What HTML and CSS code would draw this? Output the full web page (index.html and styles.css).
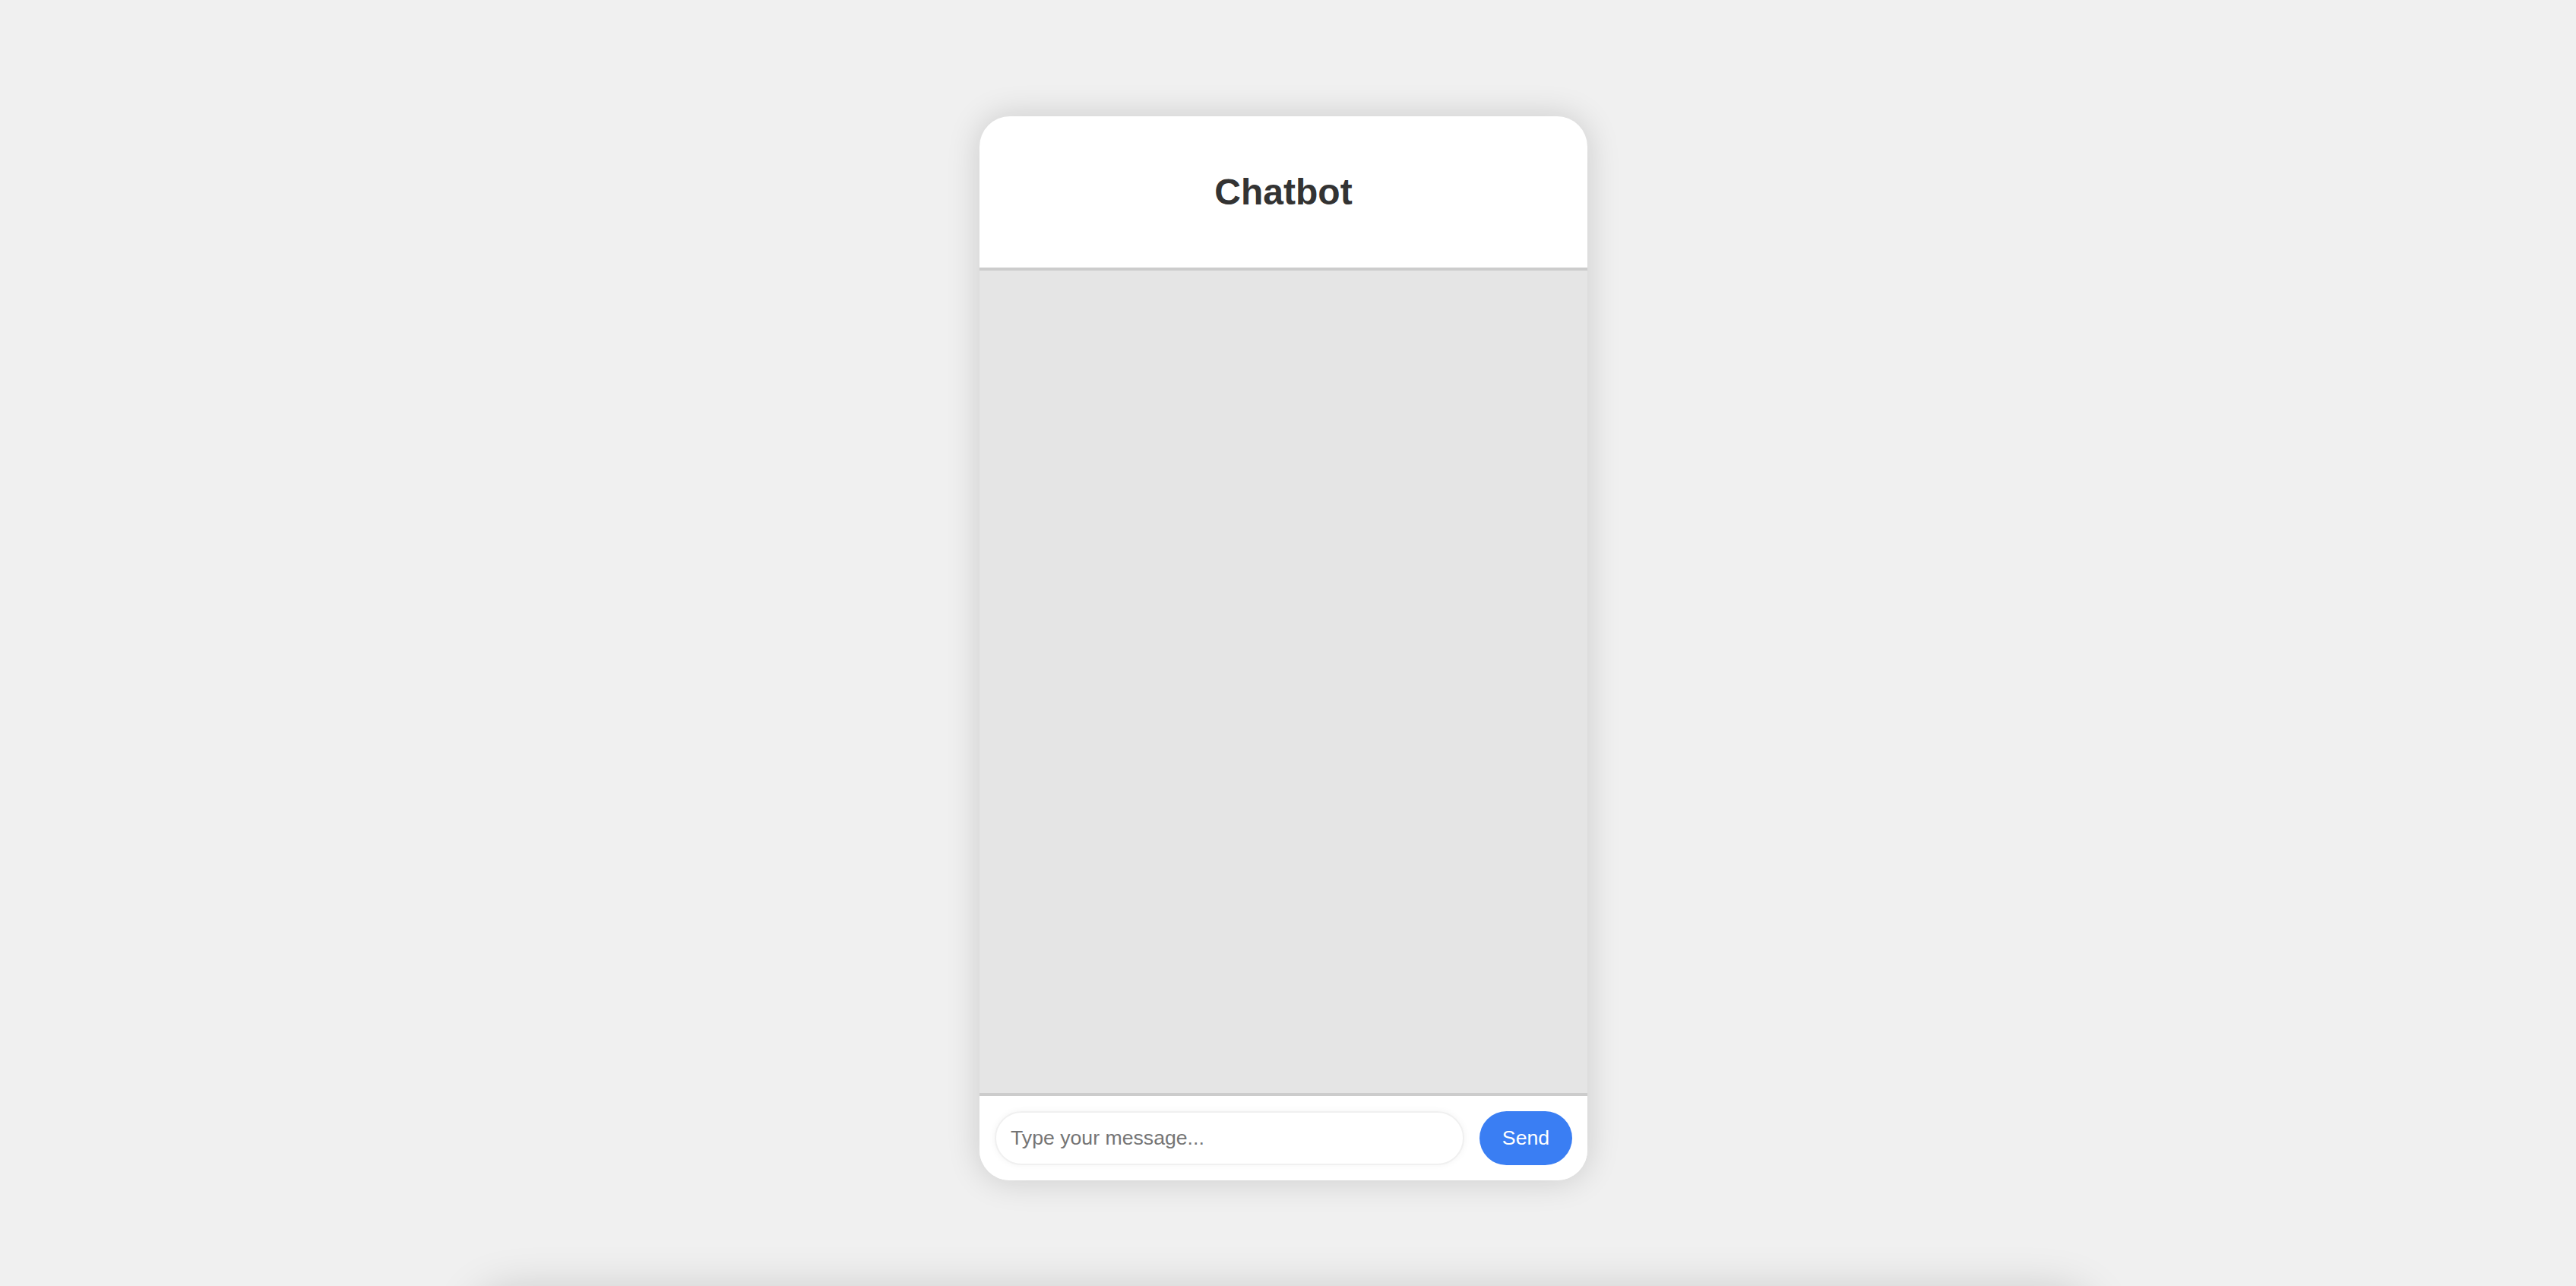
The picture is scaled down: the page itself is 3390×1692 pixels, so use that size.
FILE: index.html
```html
<!DOCTYPE html>
<html lang="en">
<head>
<meta charset="UTF-8">
<title>Chatbot</title>
<link rel="stylesheet" href="styles.css">
</head>
<body>
<div class="page">
  <div class="chat">
    <div class="chat-header">
      <h1 class="chat-title">Chatbot</h1>
    </div>
    <div class="chat-messages"></div>
    <div class="chat-composer">
      <input class="chat-input" type="text" placeholder="Type your message...">
      <button class="chat-send" type="button">Send</button>
    </div>
  </div>
  <div class="below-box"></div>
</div>
</body>
</html>
```
FILE: styles.css
```css
html, body {
  margin: 0;
  padding: 0;
  height: 100%;
  overflow: hidden;
  background: #f0f0f0;
  font-family: "Liberation Sans", Arial, Helvetica, sans-serif;
}

.page {
  display: flex;
  flex-direction: column;
  align-items: center;
  padding-top: 153px;
  padding-right: 12px;
}

.chat {
  width: 800px;
  height: 1400px;
  background: #ffffff;
  border-radius: 40px;
  overflow: hidden;
  box-shadow: 0 0 44px rgba(0, 0, 0, 0.16);
  display: flex;
  flex-direction: column;
}

.chat-header {
  height: 199px;
  flex: none;
  border-bottom: 4px solid #cccccc;
  display: flex;
  align-items: center;
  justify-content: center;
}

.chat-title {
  margin: 0;
  font-size: 48px;
  font-weight: bold;
  color: #333333;
}

.chat-messages {
  flex: 1;
  background: #e5e5e5;
}

.chat-composer {
  flex: none;
  border-top: 4px solid #cccccc;
  padding: 20px;
  display: flex;
  gap: 20px;
  background: #ffffff;
}

.chat-input {
  flex: 1;
  min-width: 0;
  height: 71px;
  box-sizing: border-box;
  border: 2px solid #f0f0f0;
  border-radius: 36px;
  padding: 0 19px;
  font-family: "Liberation Sans", Arial, Helvetica, sans-serif;
  font-size: 26.67px;
  color: #333333;
  background: #ffffff;
  box-shadow: 0 0 10px rgba(0, 0, 0, 0.05);
  outline: none;
}

.chat-input::placeholder {
  color: #757575;
}

.chat-send {
  width: 122px;
  height: 71px;
  border: none;
  border-radius: 36px;
  background: #3a7ef3;
  color: #ffffff;
  font-family: "Liberation Sans", Arial, Helvetica, sans-serif;
  font-size: 26.67px;
  padding: 0;
}

.below-box {
  margin-top: 150px;
  width: 2120px;
  height: 400px;
  background: #f0f0f0;
  border-radius: 40px;
  box-shadow: 0 0 64px rgba(0, 0, 0, 0.2);
  flex: none;
}
```
